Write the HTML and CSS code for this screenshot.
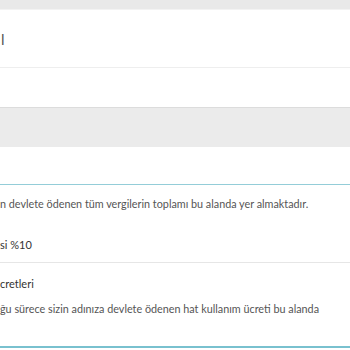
FILE: index.html
```html
<!DOCTYPE html>
<html lang="tr">
<head>
    <meta charset="UTF-8">
    <meta name="viewport" content="width=device-width, initial-scale=1.0">
    <title>Fatura Detayı</title>
    <link rel="stylesheet" href="styles.css">
</head>
<body>

<div class="page">
    <div class="top-bar"></div>

    <!-- Input field -->
    <div class="field-row"><span class="field-text">l</span></div>
    <div class="empty-row"></div>

    <div class="gray-band"></div>
    <div class="spacer-row"></div>

    <!-- Taxes -->
    <div class="section">
        <p class="desc">n devlete ödenen tüm vergilerin toplamı bu alanda yer almaktadır.</p>
        <p class="item">si %10</p>
    </div>

    <!-- Line usage fees -->
    <div class="section last">
        <p class="item title">cretleri</p>
        <p class="desc">ğu sürece sizin adınıza devlete ödenen hat kullanım ücreti bu alanda</p>
    </div>
</div>

</body>
</html>
```

FILE: styles.css
```css
body {
    font-family: Lato, "Open Sans", sans-serif;
    background-color: #fff;
    color: #333;
    margin: 0;
    padding: 0;
}
.page {
    width: 350px;
    height: 350px;
    overflow: hidden;
}
.top-bar {
    height: 9px;
    background-color: #e9e9e9;
    border-bottom: 1px solid #f3f3f3;
}
.field-row {
    height: 57px;
    border-bottom: 1px solid #eeeeee;
    display: flex;
    align-items: center;
}
.field-text {
    font-size: 15px;
    color: #555;
    margin-left: 1px;
}
.empty-row {
    height: 39px;
    border-bottom: 1px solid #dcdcdc;
}
.gray-band {
    height: 39px;
    background-color: #ebebeb;
}
.spacer-row {
    height: 37px;
    border-bottom: 1px solid #94cdd8;
}
.section {
    border-bottom: 1px solid #e6e6e6;
}
.section.last {
    border-bottom: 2px solid #79c1cf;
}
.desc {
    margin: 0;
    padding: 12px 0 0;
    font-size: 10.8px;
    line-height: 14px;
    color: #555;
}
.item {
    margin: 0;
    padding: 26px 0 10px;
    font-size: 11px;
    line-height: 15px;
    color: #333;
}
.item.title {
    padding: 13px 0 0;
}
.section.last .desc {
    padding: 11px 0 30px;
}
```
